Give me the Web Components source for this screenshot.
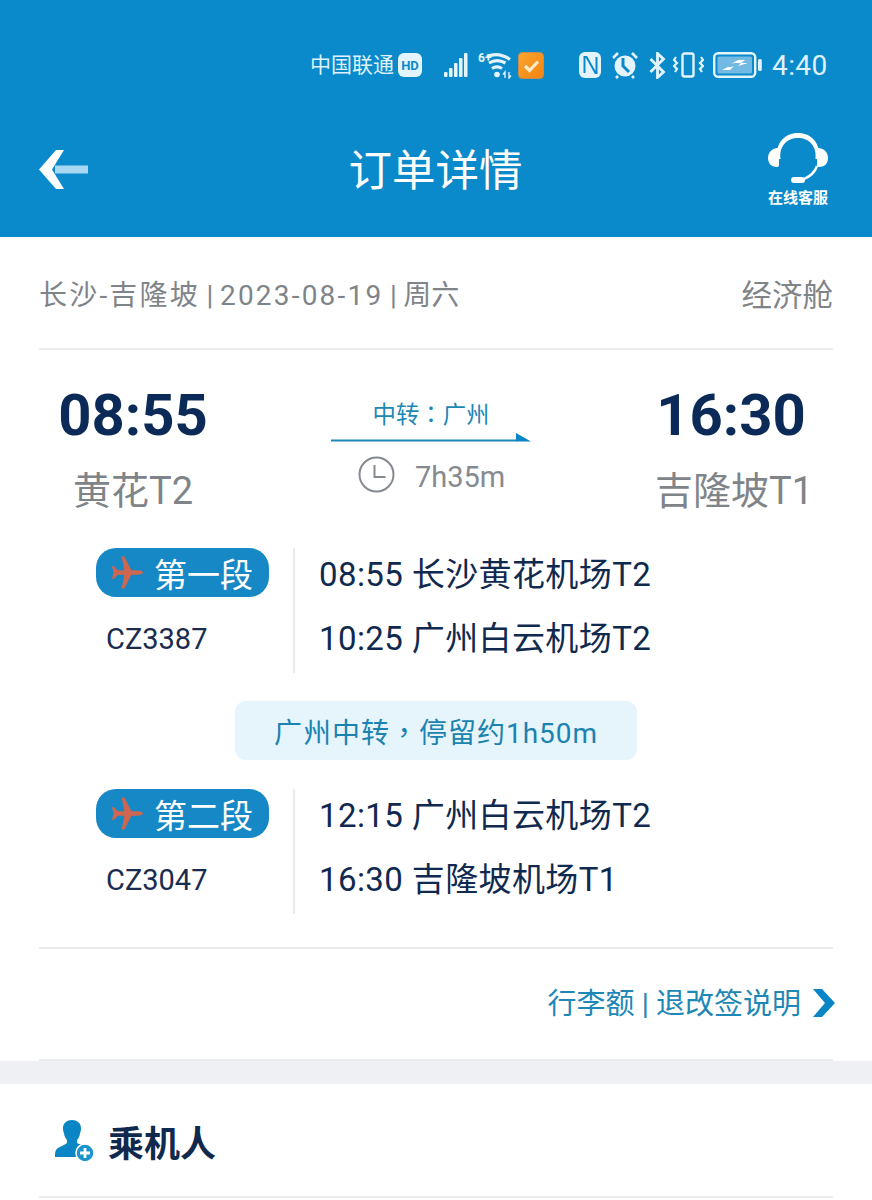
<!DOCTYPE html>
<html lang="zh-CN"><head><meta charset="utf-8"><title>订单详情</title>
<style>
html,body{margin:0;padding:0;background:#fff}
body{width:872px;height:1200px;overflow:hidden;font-family:Roboto,"Noto Sans CJK SC",sans-serif}
</style></head><body>
<order-page></order-page>
<script>
const FONT='Roboto,"Noto Sans CJK SC",sans-serif';
function def(name,html){customElements.define(name,class extends HTMLElement{constructor(){super();this.attachShadow({mode:'open'}).innerHTML=html;}});}

def('status-bar',`<style>
:host{display:flex;height:130px;box-sizing:border-box;align-items:center;justify-content:flex-end;padding-right:49px;color:#dff2fb}
svg{display:block;flex:none}
.c{font-size:21px;width:84px;white-space:nowrap;margin-bottom:4px}
.t{font-size:28px;margin-left:10px;width:51px;white-space:nowrap;letter-spacing:.4px}
</style>
<span class="c">中国联通</span>
<svg style="margin-left:4px" width="24" height="24" viewBox="0 0 24 24"><rect width="24" height="24" rx="6" fill="#e4f4fc"/><text x="12" y="17" text-anchor="middle" font-size="13" font-weight="700" font-family="Roboto" fill="#0b8acb">HD</text></svg>
<svg style="margin-left:22px" width="24" height="24" viewBox="0 0 24 24" fill="#e4f4fc"><rect x="0" y="19" width="3.500" height="5" rx="1"/><rect x="5" y="15" width="3.500" height="9" rx="1"/><rect x="10" y="10" width="3.500" height="14" rx="1"/><rect x="15" y="5" width="3.500" height="19" rx="1"/><rect x="20" y="0" width="3.500" height="24" rx="1"/></svg>
<svg style="margin-left:10px" width="34" height="28" viewBox="0 0 34 28" fill="none" stroke="#e4f4fc" stroke-width="3.200"><text x="0" y="11" font-size="12" font-weight="700" font-family="Roboto" fill="#e4f4fc" stroke="none">6+</text><path d="M9 5.500c8-3.500 16-2 23 3"/><path d="M11 12c5-3 11-3 16.500 0"/><path d="M14 17.500c3-2 7-2 10 0"/><circle cx="19" cy="23.500" r="2.800" fill="#e4f4fc" stroke="none"/><path d="M27 27v-6l-2 2.500M31 21v6l2-2.500" stroke-width="1.400"/></svg>
<svg style="margin-left:6px" width="26" height="27" viewBox="0 0 26 27"><defs><linearGradient id="g" x1="0" y1="0" x2="1" y2="1"><stop offset="0" stop-color="#f9a630"/><stop offset="1" stop-color="#f5820f"/></linearGradient></defs><rect x=".5" y=".5" width="25" height="26" rx="4" fill="url(#g)" stroke="#c98a4a"/><path d="M7 14l4.500 4.500L20 9.500" fill="none" stroke="#ffeccb" stroke-width="3.200"/></svg>
<svg style="margin-left:35px" width="22" height="26" viewBox="0 0 22 26"><rect width="22" height="26" rx="6" fill="#e4f4fc"/><path d="M5.500 21V5h2l9 16h1V5" fill="none" stroke="#0b8acb" stroke-width="2"/></svg>
<svg style="margin-left:11px" width="26" height="28" viewBox="0 0 26 28"><circle cx="13" cy="15" r="10.500" fill="#e4f4fc"/><path d="M11 7v8l6 6" fill="none" stroke="#0b8acb" stroke-width="3"/><path d="M1 7l5-5M25 7l-5-5M6 25l-2 2M20 25l2 2" stroke="#e4f4fc" stroke-width="2.600"/></svg>
<svg style="margin-left:11px" width="17" height="27" viewBox="0 0 17 27" fill="none" stroke="#e4f4fc" stroke-width="2.800"><path d="M1.500 7l13 13-6 5.500V1.500l6 5.500L1.500 20"/></svg>
<svg style="margin-left:7px" width="31" height="26" viewBox="0 0 31 26" fill="none" stroke="#e4f4fc" stroke-width="2.400"><rect x="9.500" y="1.500" width="11" height="23" rx="2"/><path d="M3 5l-2 3 3 3-3 3 3 3-2 3M28 5l2 3-3 3 3 3-3 3 2 3" stroke-width="2.200"/></svg>
<svg style="margin-left:9px" width="49" height="26" viewBox="0 0 49 26"><rect x="1.200" y="1.200" width="41" height="23.600" rx="4" fill="none" stroke="#e4f4fc" stroke-width="2.400"/><rect x="4.500" y="4.500" width="34.500" height="17" rx="1.500" fill="#72b9e4"/><path d="M9 18l6-3h3l3-1-4 4zM18 12l7-4h7l-4 3h7l-10 3 3-3h-7z" fill="#fff"/><rect x="45" y="7" width="3.800" height="12" rx="1.500" fill="#e4f4fc"/></svg>
<span class="t">4:40</span>`);

def('nav-bar',`<style>
:host{display:grid;grid-template-columns:1fr auto 1fr;grid-template-rows:79px;align-items:center;height:107px;box-sizing:border-box;padding:0 44px 28px 39px;color:#fff}
h1{margin:4px 0 0 4px;font-size:43.500px;line-height:60px;font-weight:400;white-space:nowrap}
.back{justify-self:start}
.svc{justify-self:end;align-self:start;display:flex;flex-direction:column;align-items:center;font-size:15px;font-weight:700;line-height:16px;white-space:nowrap;margin-top:3px}
svg{display:block}
</style>
<svg class="back" width="49" height="39" viewBox="0 0 49 39"><rect x="16" y="15.500" width="33" height="8" fill="#a9d8f2"/><path d="M17 0h8L13 19.500 25 39h-8L0 19.500z" fill="#fff"/></svg>
<h1>订单详情</h1>
<div class="svc"><svg style="margin-bottom:6px" width="60" height="51" viewBox="0 0 60 51"><path d="M9 26C7 10 17 0 30 0s23 10 21 26h-3.500C49 13 41 5 30 5S11 13 12.500 26z" fill="#fff"/><path d="M9 15C3 16 0 20 0 25s3 9 9 9c1.500 0 2-1 2-2V17c0-1.500-1-2-2-2zM51 15c6 1 9 5 9 10s-3 9-9 9c-1.500 0-2-1-2-2V17c0-1.500 1-2 2-2z" fill="#fff"/><path d="M49 33c-2 6-6 10-13 13" fill="none" stroke="#fff" stroke-width="2.400"/><rect x="23" y="44" width="14" height="6" rx="3" fill="#fff"/></svg><span>在线客服</span></div>`);

def('app-header',`<style>:host{display:block;height:237px;background:#0a8acb}</style><slot></slot>`);

def('route-sep',`<style>:host{display:inline-block;width:20px;text-align:center;letter-spacing:0}</style><slot></slot>`);

def('trip-meta',`<style>
:host{display:flex;justify-content:space-between;align-items:center;height:113px;margin:0 39px;border-bottom:2px solid #e9ebee;box-sizing:border-box;padding-top:1px;color:#7f8489}
.a{font-size:28px;white-space:nowrap;letter-spacing:2.200px}.b{font-size:30.500px}
</style><span class="a"><slot name="route"></slot></span><span class="b"><slot name="cabin"></slot></span>`);

def('time-point',`<style>
:host{display:flex;flex-direction:column;align-items:center;white-space:nowrap}
.t{font-size:58px;font-weight:700;line-height:66px;color:#0b2a57}
.p{font-size:38px;line-height:50px;color:#7f8489;margin-top:18px}
</style><div class="t"><slot name="time"></slot></div><div class="p"><slot name="place"></slot></div>`);

def('transfer-line',`<style>
:host{display:flex;flex-direction:column;align-items:center;width:200px;white-space:nowrap}
.v{font-family:Roboto,"Noto Sans CJK TC",sans-serif;font-size:23.400px;line-height:32px;color:#1d87b5}
svg{display:block}
.d{display:flex;align-items:center;margin-top:11px;align-self:stretch;color:#858a91;font-size:29px;line-height:38px;padding-left:27px}
.d span{margin:5px 0 0 20px}
</style><div class="v" lang="zh-TW"><slot></slot></div>
<svg style="margin-top:1px" width="200" height="10" viewBox="0 0 200 10"><path d="M0 8.500h186" stroke="#1d87b5" stroke-width="2"/><path d="M185 1l15 8.500h-15z" fill="#0a86c6"/></svg>
<div class="d"><svg width="37" height="37" viewBox="0 0 37 37" fill="none" stroke="#858a91" stroke-width="2"><circle cx="18.500" cy="18.500" r="17"/><path d="M16.500 9v12h11"/></svg><span><slot name="dur"></slot></span></div>`);

def('trip-summary',`<style>
:host{display:grid;grid-template-columns:188px 1fr 204px;margin:0 39px;padding-top:32px;height:198px;box-sizing:border-box}
.m{display:flex;justify-content:center;padding-left:6px;padding-top:17px}
</style><slot name="from"></slot><div class="m"><slot name="mid"></slot></div><slot name="to"></slot>`);

def('flight-seg',`<style>
:host{display:grid;grid-template-columns:173px auto;margin-left:96px;white-space:nowrap}
.l{display:flex;flex-direction:column;align-items:flex-start}
.b{display:flex;align-items:center;width:173px;height:49px;border-radius:20px;background:#1688c6;color:#fff;font-size:33px;box-sizing:border-box;padding-left:15px}
.b svg{display:block;margin-right:11px}
.n{font-size:29px;line-height:40px;color:#1a2c4e;margin:22px 0 0 10px}
.r{margin-left:24px;border-left:2px solid #e9ebee;padding-left:24px;height:125px;display:flex;flex-direction:column;font-size:33px;color:#10294f;letter-spacing:.4px}
.r div{line-height:44px;height:44px}
.r .one{margin-top:5px}.r .two{margin-top:20px}
</style>
<div class="l"><div class="b"><svg width="32" height="33" viewBox="0 0 36 36"><path d="M36 18c0-1.500-3-2.500-6-2.500h-7L15 0h-3l3 15.500H7.500L3.500 11H1L3 18 1 25h2.500l4-4.500H15L12 36h3l8-15.500h7c3 0 6-1 6-2.500z" fill="#cf6650"/></svg><slot name="label"></slot></div><div class="n"><slot name="no"></slot></div></div>
<div class="r"><div class="one"><slot name="a"></slot></div><div class="two"><slot name="b"></slot></div></div>`);

def('transfer-note',`<style>
:host{display:flex;align-items:center;justify-content:center;width:402px;height:59px;margin:28px auto 29px;background:#e6f4fc;border-radius:11px;color:#1b83af;font-family:Roboto,"Noto Sans CJK TC",sans-serif;font-size:28px;letter-spacing:1px;white-space:nowrap}
</style><span lang="zh-TW"><slot></slot></span>`);

def('rule-link',`<style>
:host{display:flex;justify-content:flex-end;align-items:center;height:114px;margin:0 39px;box-sizing:border-box;border-top:2px solid #e9ebee;border-bottom:2px solid #e9ebee;color:#1d87b5;font-size:29px;padding-bottom:6px;white-space:nowrap}
svg{display:block;margin:4px -2px 0 12px}
</style><slot></slot><svg width="22" height="28" viewBox="0 0 22 28"><path d="M0 0h9l13 14L9 28H0l12-14z" fill="#0a86c6"/></svg>`);

def('gray-band',`<style>:host{display:block;height:23px;background:#eef0f3}</style>`);

def('passenger-head',`<style>
:host{display:flex;align-items:center;height:114px;margin:0 39px;box-sizing:border-box;border-bottom:2px solid #e9ebee;padding-left:16px;padding-top:2px;color:#10294f;font-size:36px;font-weight:700}
svg{display:block;margin-right:14px}
</style><svg width="39" height="42" viewBox="0 0 39 42"><path d="M8 8C8 3 12 0 17 0s9 3 9 8c0 3-.5 4-1 5 0 3-2 6-3 7v3c2 1 5 2 7 3-4 2-6 6-5 11H0c0-4 0-7 3-9 3-2 7-3 9-5v-3c-1-1-3-4-3-7-.500-1-1-2-1-5z" fill="#0a86c6"/><circle cx="30" cy="33" r="9" fill="#1a93cf" stroke="#fff" stroke-width="1.500"/><path d="M30 28v10M25 33h10" stroke="#fff" stroke-width="2.800"/></svg><slot></slot>`);

def('order-page',`<style>:host{display:block;width:872px;height:1200px;overflow:hidden;background:#fff;font-family:${FONT}}</style>
<app-header><status-bar></status-bar><nav-bar></nav-bar></app-header>
<trip-meta><span slot="route">长沙-吉隆坡<route-sep> | </route-sep>2023-08-19<route-sep> | </route-sep><span style="letter-spacing:0">周六</span></span><span slot="cabin">经济舱</span></trip-meta>
<trip-summary>
<time-point slot="from"><span slot="time">08:55</span><span slot="place">黄花T2</span></time-point>
<transfer-line slot="mid">中转：广州<span slot="dur">7h35m</span></transfer-line>
<time-point slot="to"><span slot="time">16:30</span><span slot="place" style="margin-left:6px">吉隆坡T1</span></time-point>
</trip-summary>
<flight-seg><span slot="label">第一段</span><span slot="no">CZ3387</span><span slot="a">08:55 长沙黄花机场T2</span><span slot="b">10:25 广州白云机场T2</span></flight-seg>
<transfer-note>广州中转，停留约1h50m</transfer-note>
<flight-seg><span slot="label">第二段</span><span slot="no">CZ3047</span><span slot="a">12:15 广州白云机场T2</span><span slot="b">16:30 吉隆坡机场T1</span></flight-seg>
<rule-link style="margin-top:33px">行李额 | 退改签说明</rule-link>
<gray-band></gray-band>
<passenger-head>乘机人</passenger-head>`);
</script></body></html>
